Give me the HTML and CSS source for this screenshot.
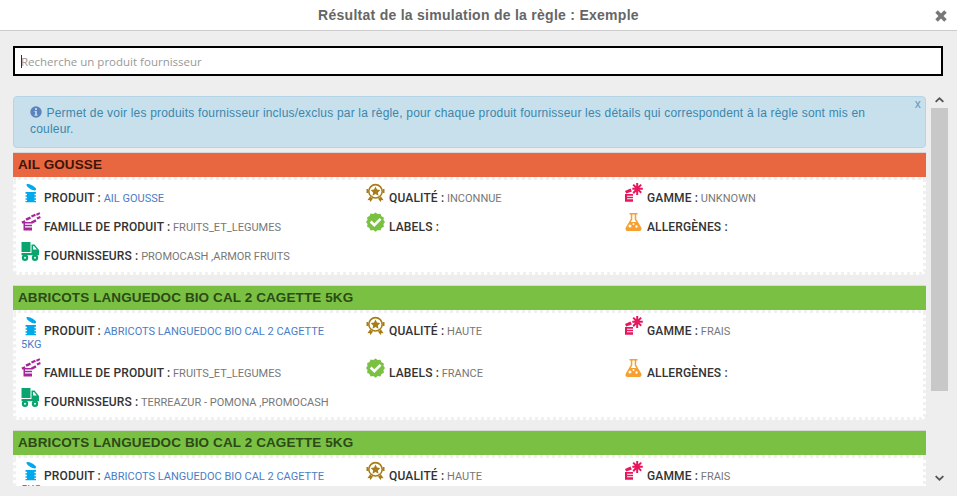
FILE: index.html
```html
<!DOCTYPE html>
<html lang="fr">
<head>
<meta charset="utf-8">
<title>Résultat de la simulation</title>
<link rel="stylesheet" href="styles.css">
</head>
<body>
<svg class="sprite" xmlns="http://www.w3.org/2000/svg">
  <symbol id="i-prod" viewBox="0 0 20 20">
    <path d="M6 1c2-.5 6.500 1.700 8.600 4 .8.900.6 2.300-.6 2.400C11 7.500 6.800 5 5.700 2.600 5.400 1.800 5.400 1.200 6 1z"/>
    <path d="M4.500 9H15v1.700h-1.500v1.600H15v1.400h-1.500v1.600H15v1.400h-1.500V18H15v1.300H4.500V18H6v-1.300H4.500v-1.400H6v-1.600H4.500v-1.400H6v-1.600H4.500z"/>
  </symbol>
  <symbol id="i-fam" viewBox="0 0 20 20">
    <path d="M.5 9.500l3.300-1.200.7 1.700h6.500v1.600h-7v1.200h7v1.400h-7v1.200h7v3.100H2.500v-7H1.200z"/>
    <path d="M4.500 6.500l4.500-2 1 2.300-4.500 2zM10 9.500l4.500-2.200 1 2.200-4.500 2.300z"/>
    <path d="M10 3.500l4-1.800.9 2-4 1.800zM15.500 5.500l3.500-1.600.8 2-3.500 1.600zM15 1.800l3.500-1.500.8 1.800-3.500 1.600z"/>
  </symbol>
  <symbol id="i-truck" viewBox="0 0 20 20">
    <path d="M.5 1h9v10h-9z"/>
    <path fill-rule="evenodd" d="M10.500 3.500h3l4.500 5.500v3h-7.500zM12 5v3.500h3.800L13 5z"/>
    <path d="M.5 12h17.500v2.200H.5z"/>
    <path fill-rule="evenodd" d="M4 13.500a3.200 3.200 0 110 6.400 3.200 3.200 0 010-6.400zm0 2.200a1 1 0 100 2 1 1 0 000-2zM14 13.500a3.200 3.200 0 110 6.400 3.200 3.200 0 010-6.400zm0 2.200a1 1 0 100 2 1 1 0 000-2z"/>
  </symbol>
  <symbol id="i-qual" viewBox="0 0 20 20">
    <path fill-rule="evenodd" d="M9.500.8a7.500 7.500 0 110 15 7.500 7.500 0 010-15zm0 1.600a5.900 5.900 0 100 11.800 5.900 5.900 0 000-11.800z"/>
    <path d="M9.500 3.600l1.500 3 3.300.5-2.400 2.300.6 3.300-3-1.600-3 1.600.6-3.300-2.400-2.300 3.300-.5z"/>
    <path d="M4 13.500l3 2.200-2.700 3.300-.7-2-2.200.3zM15 13.500l-3 2.200 2.700 3.300.7-2 2.200.3z"/>
    <path d="M.5 6h1.800v4H.5zM16.700 6h1.800v4h-1.800z"/>
  </symbol>
  <symbol id="i-label" viewBox="0 0 20 20">
    <path fill-rule="evenodd" d="M9.500.5l2.200 1.600 2.700-.3 1.100 2.400 2.400 1.200-.4 2.700L19 10l-1.500 2.100.4 2.700-2.400 1.200-1.100 2.400-2.700-.3-2.200 1.600-2.200-1.600-2.700.3L3.500 16l-2.400-1.200.4-2.700L0 10l1.500-2.100-.4-2.700 2.400-1.200 1.100-2.400 2.700.3zM13.700 6L8.300 11.300 5.500 8.600 3.700 10.400l4.600 4.500 7.200-7.100z"/>
  </symbol>
  <symbol id="i-gam" viewBox="0 0 20 20">
    <path d="M1 11h8v1.800H3v1h6v1.400H3v1h6v2.500H1z"/>
    <path d="M1 8l5.500-2.500 1.400 3L2.200 10.500z"/>
    <path d="M12.200 0h2v3.300L16.500.9l1.400 1.400-2.400 2.400h3.300v2h-3.300l2.400 2.400-1.400 1.400-2.300-2.400V12h-2V8.500L9.900 10.900 8.500 9.500l2.400-2.800H8.300v-2h2.600L8.500 2.300 9.900.9l2.300 2.400z"/>
  </symbol>
  <symbol id="i-all" viewBox="0 0 20 20">
    <path fill-rule="evenodd" d="M5.500 1h8v1.500h-1.300V7l5 8.500c.9 1.700-.1 3.500-1.900 3.500H3.700C1.900 19 .9 17.200 1.800 15.500l5-8.500V2.500H5.500zM8.300 2.500V7.400L6.800 10h5.400l-1.500-2.600V2.500zM6 12.500a1.500 1.500 0 100 3 1.500 1.500 0 000-3zm6.500.8a1.200 1.200 0 100 2.400 1.200 1.200 0 000-2.400zM9.500 11a1 1 0 100 2 1 1 0 000-2z"/>
  </symbol>
</svg>

<header class="title-bar">
  <h1 class="title">Résultat de la simulation de la règle : Exemple</h1>
  <button class="close" type="button" aria-label="Fermer">
    <svg viewBox="0 0 12 12" width="12" height="12"><path d="M2.800.3L6 3.500 9.200.3l2.500 2.500L8.500 6l3.200 3.200-2.500 2.500L6 8.500l-3.200 3.200L.3 9.200 3.500 6 .3 2.800z"/></svg>
  </button>
</header>

<main class="body">
  <div class="search">
    <input class="search-input" type="text" placeholder="Recherche un produit fournisseur">
    <span class="caret"></span>
  </div>

  <div class="scroller">
    <div class="list">
      <div class="alert">
        <span class="alert-x">x</span>
        <svg class="info" viewBox="0 0 12 12" width="12" height="12"><path fill-rule="evenodd" d="M6 .3a5.700 5.700 0 110 11.400A5.700 5.700 0 016 .3zM5 2.200v1.800h2V2.200zM4.500 5v1.100h.7v2.500h-.7v1.100h3V8.600h-.7V5z"/></svg>
        Permet de voir les produits fournisseur inclus/exclus par la règle, pour chaque produit fournisseur les détails qui correspondent à la règle sont mis en couleur.
      </div>

      <article class="product">
        <h2 class="product-name excluded">AIL GOUSSE</h2>
        <div class="details">
          <p class="cell"><svg class="ico c-prod"><use href="#i-prod"/></svg><b>PRODUIT :</b> <a class="link">AIL GOUSSE</a></p>
          <p class="cell"><svg class="ico c-qual"><use href="#i-qual"/></svg><b>QUALITÉ :</b> INCONNUE</p>
          <p class="cell"><svg class="ico c-gam"><use href="#i-gam"/></svg><b>GAMME :</b> UNKNOWN</p>
          <p class="cell"><svg class="ico c-fam"><use href="#i-fam"/></svg><b>FAMILLE DE PRODUIT :</b> FRUITS_ET_LEGUMES</p>
          <p class="cell"><svg class="ico c-label"><use href="#i-label"/></svg><b>LABELS :</b></p>
          <p class="cell"><svg class="ico c-all"><use href="#i-all"/></svg><b>ALLERGÈNES :</b></p>
          <p class="cell"><svg class="ico c-truck"><use href="#i-truck"/></svg><b>FOURNISSEURS :</b> PROMOCASH ,ARMOR FRUITS</p>
        </div>
      </article>

      <article class="product">
        <h2 class="product-name included">ABRICOTS LANGUEDOC BIO CAL 2 CAGETTE 5KG</h2>
        <div class="details">
          <p class="cell"><svg class="ico c-prod"><use href="#i-prod"/></svg><b>PRODUIT :</b> <a class="link">ABRICOTS LANGUEDOC BIO CAL 2 CAGETTE 5KG</a></p>
          <p class="cell"><svg class="ico c-qual"><use href="#i-qual"/></svg><b>QUALITÉ :</b> HAUTE</p>
          <p class="cell"><svg class="ico c-gam"><use href="#i-gam"/></svg><b>GAMME :</b> FRAIS</p>
          <p class="cell"><svg class="ico c-fam"><use href="#i-fam"/></svg><b>FAMILLE DE PRODUIT :</b> FRUITS_ET_LEGUMES</p>
          <p class="cell"><svg class="ico c-label"><use href="#i-label"/></svg><b>LABELS :</b> FRANCE</p>
          <p class="cell"><svg class="ico c-all"><use href="#i-all"/></svg><b>ALLERGÈNES :</b></p>
          <p class="cell"><svg class="ico c-truck"><use href="#i-truck"/></svg><b>FOURNISSEURS :</b> TERREAZUR - POMONA ,PROMOCASH</p>
        </div>
      </article>

      <article class="product">
        <h2 class="product-name included">ABRICOTS LANGUEDOC BIO CAL 2 CAGETTE 5KG</h2>
        <div class="details">
          <p class="cell"><svg class="ico c-prod"><use href="#i-prod"/></svg><b>PRODUIT :</b> <a class="link">ABRICOTS LANGUEDOC BIO CAL 2 CAGETTE 5KG</a></p>
          <p class="cell"><svg class="ico c-qual"><use href="#i-qual"/></svg><b>QUALITÉ :</b> HAUTE</p>
          <p class="cell"><svg class="ico c-gam"><use href="#i-gam"/></svg><b>GAMME :</b> FRAIS</p>
        </div>
      </article>
    </div>

    <div class="rail">
      <svg class="chev" viewBox="0 0 9 6" width="9" height="6"><path d="M4.500 0L9 4.300 7.700 5.600 4.500 2.500 1.300 5.600 0 4.300z"/></svg>
      <div class="thumb"></div>
      <svg class="chev chev-down" viewBox="0 0 9 6" width="9" height="6"><path d="M4.500 6L0 1.700 1.300.4 4.500 3.500 7.700.4 9 1.700z"/></svg>
    </div>
  </div>
</main>
</body>
</html>
```

FILE: styles.css
```css
* { box-sizing: border-box; }
html, body { margin: 0; height: 100%; overflow: hidden; }
body { background: #eee; font-family: "Roboto", sans-serif; display: flex; flex-direction: column; }
.sprite { display: none; }

.title-bar { position: relative; height: 31px; flex: none; background: #fff; border-bottom: 1px solid #ccc; display: flex; align-items: center; justify-content: center; }
.title { margin: 0; font: bold 14px/30px "Liberation Sans", sans-serif; color: #666; letter-spacing: .27px; }
.close { position: absolute; right: 10px; top: 10px; padding: 0; border: 0; background: none; width: 12px; height: 12px; display: block; }
.close svg { display: block; fill: #777; }

.body { flex: 1; padding: 15px 14px 10px 13px; display: flex; flex-direction: column; min-height: 0; }

.search { position: relative; height: 30px; flex: none; margin-bottom: 20px; }
.search-input { display: block; width: 100%; height: 100%; border: 2px solid #000; background: #fff; padding: 0 6px; font: 11.500px "Open Sans", sans-serif; outline: none; border-radius: 0; }
.search-input::placeholder { color: #999; opacity: 1; }
.caret { position: absolute; left: 8px; top: 9px; width: 1px; height: 13px; background: #333; }

.scroller { flex: 1; display: flex; min-height: 0; overflow: hidden; width: 939px; }
.list { width: 913px; flex: none; }

.alert { position: relative; height: 52px; margin-bottom: 5px; padding: 8px 29px 0 16px; background: #c7e0ec; border: 1px solid #b3d5e7; border-radius: 4px; color: #3a87ad; font: 12px/16px "Liberation Sans", sans-serif; letter-spacing: .19px; }
.alert-x { position: absolute; right: 4px; top: -1px; font-size: 12px; color: #5b9bc4; }
.info { vertical-align: -1px; margin-right: 1px; fill: #5b82bd; }

.product { margin-bottom: 11px; }
.product-name { margin: 0; height: 24px; padding: 0 5px; font: bold 13.500px/24px "Liberation Sans", sans-serif; letter-spacing: .1px; box-shadow: 0 -1px 0 #d8d8d8; }
.excluded { background: #e96740; color: #3d1608; }
.included { background: #7ac143; color: #2c4a17; }

.details { display: grid; grid-template-columns: 345px 258px 1fr; padding: 3px 5px 1.500px; background: #fff; border: 3px dotted #f0f0f0; border-radius: 0 0 5px 5px; align-items: start; }
.cell { margin: 0 0 7px; padding-right: 30px; font-size: 11px; line-height: 13px; color: #777; }
.cell b { font-size: 12px; font-weight: 500; color: #333; letter-spacing: .15px; }
.link { color: #4a7dc4; }
.ico { width: 20px; height: 20px; margin-right: 3px; vertical-align: -1px; }
.c-prod { fill: #00a8ec; }
.c-fam { fill: #a3279a; }
.c-truck { fill: #0aa56e; }
.c-qual { fill: #a87d15; }
.c-label { fill: #7ac143; }
.c-gam { fill: #e8175d; }
.c-all { fill: #f5a030; }

.rail { flex: none; display: flex; flex-direction: column; align-items: center; margin-left: 5px; width: 17px; }
.chev { display: block; flex: none; margin-top: 1px; fill: #555; }
.thumb { width: 17px; height: 283px; margin-top: 5px; background: #c8c8c8; flex: none; }
.chev-down { margin-top: auto; margin-bottom: 5px; }
```
